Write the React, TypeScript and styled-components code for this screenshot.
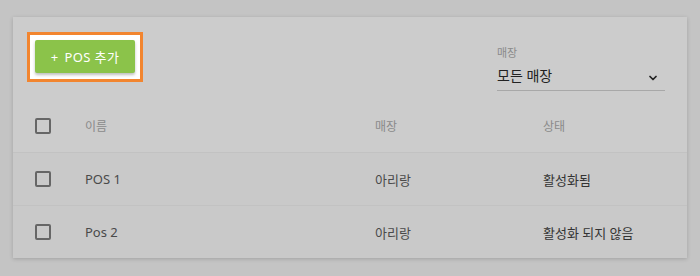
import { FC } from "react";
import styled, { createGlobalStyle } from "styled-components";
import { ChevronDown } from "lucide-react";

const GlobalStyle = createGlobalStyle`
  html, body {
    margin: 0;
    padding: 0;
    background: #c4c4c4;
    font-family: "Noto Sans", "Noto Sans CJK KR", sans-serif;
  }
`;

const Page = styled.div`
  padding: 17px 13px 20px 13px;
  width: 674px;
`;

const Card = styled.div`
  background: #cccccc;
  box-shadow: 0 1px 4px rgba(0, 0, 0, 0.18);
`;

const Toolbar = styled.div`
  display: flex;
  justify-content: space-between;
  align-items: flex-start;
  padding: 15px 22px 0 14px;
  height: 68px;
`;

const Highlight = styled.div`
  border: 3px solid #f2852f;
  background: #ffffff;
  padding: 5px 5px 6px 5px;
`;

const AddButton = styled.button`
  width: 100px;
  height: 33px;
  border: none;
  border-radius: 2px;
  background: #8bc34a;
  color: #ffffff;
  font-family: "Noto Sans", "Noto Sans CJK KR", sans-serif;
  font-size: 13px;
  letter-spacing: 0.4px;
  box-shadow: 0 2px 3px rgba(0, 0, 0, 0.25);
  padding: 0;
  display: flex;
  align-items: center;
  justify-content: center;
  gap: 6px;
`;

const SelectField = styled.div`
  width: 168px;
  margin-top: 14px;
  display: flex;
  flex-direction: column;
`;

const SelectLabel = styled.div`
  font-size: 11px;
  color: #8a8a8a;
  line-height: 14px;
`;

const SelectBox = styled.div`
  display: flex;
  align-items: center;
  justify-content: space-between;
  height: 30px;
  border-bottom: 1px solid #a8a8a8;
  font-size: 14px;
  color: #222222;
  padding-right: 6px;

  svg {
    margin-top: 6px;
  }
`;

const Row = styled.div<{ $head?: boolean }>`
  display: grid;
  grid-template-columns: 50px 290px 168px 1fr;
  align-items: center;
  height: 52px;
  padding-left: 22px;
  background: ${({ $head }) => ($head ? "transparent" : "#c9c9c9")};
  border-top: ${({ $head }) => ($head ? "none" : "1px solid #c2c2c2")};
  font-size: ${({ $head }) => ($head ? "12px" : "13px")};
  color: ${({ $head }) => ($head ? "#8a8a8a" : "#4a4a4a")};
`;

const Checkbox = styled.span`
  display: block;
  width: 12px;
  height: 12px;
  border: 2px solid #666666;
  border-radius: 2px;
`;

const Cell = styled.span<{ $dark?: boolean }>`
  color: ${({ $dark }) => ($dark ? "#333333" : "inherit")};
`;

const rows = [
  { name: "POS 1", store: "아리랑", status: "활성화됨" },
  { name: "Pos 2", store: "아리랑", status: "활성화 되지 않음" },
];

const App: FC = () => {
  return (
    <>
      <GlobalStyle />
      <Page>
        <Card>
          <Toolbar>
            <Highlight>
              <AddButton>
                <span>+</span>
                <span>POS 추가</span>
              </AddButton>
            </Highlight>
            <SelectField>
              <SelectLabel>매장</SelectLabel>
              <SelectBox>
                <span>모든 매장</span>
                <ChevronDown size={12} strokeWidth={3.5} color="#222" />
              </SelectBox>
            </SelectField>
          </Toolbar>
          <Row $head>
            <Checkbox />
            <Cell>이름</Cell>
            <Cell>매장</Cell>
            <Cell>상태</Cell>
          </Row>
          {rows.map((r) => (
            <Row key={r.name}>
              <Checkbox />
              <Cell>{r.name}</Cell>
              <Cell>{r.store}</Cell>
              <Cell $dark>{r.status}</Cell>
            </Row>
          ))}
        </Card>
      </Page>
    </>
  );
};

export default App;
